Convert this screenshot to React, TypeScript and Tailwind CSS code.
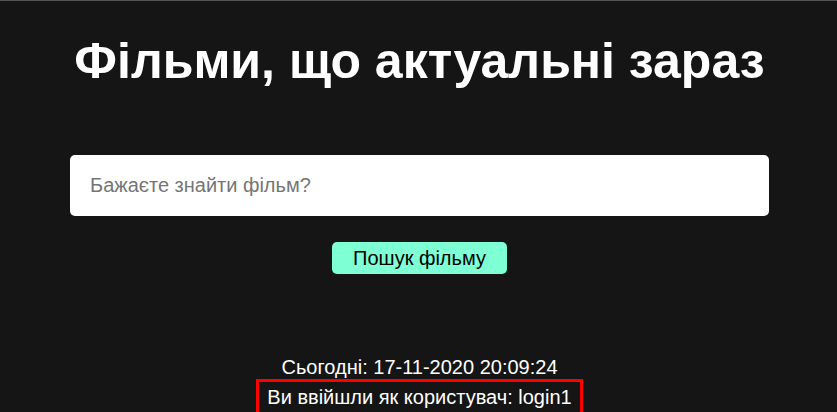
import React from "react";

export default function App() {
  return (
    <div className="min-h-[412px] bg-[#151515] border-t border-[#555555] pl-[2px] flex flex-col items-center font-['Liberation_Sans',Arial,sans-serif]">
      <h1 className="mt-[32px] text-[50px] leading-[57px] font-bold text-white">
        Фільми, що актуальні зараз
      </h1>
      <input
        type="text"
        placeholder="Бажаєте знайти фільм?"
        className="mt-[65px] w-[699px] h-[61px] rounded-[5px] bg-white px-[20px] text-[20px] text-black outline-none placeholder:text-[#757575]"
      />
      <button className="mt-[26px] h-[32px] px-[21px] rounded-[5px] bg-[#7fffd4] text-[20px] leading-[23px] text-black">
        Пошук фільму
      </button>
      <p className="mt-[82px] text-[20px] leading-[23px] text-white">
        Сьогодні: 17-11-2020 20:09:24
      </p>
      <div className="border-[3px] border-[#ff0000] px-[8px] py-[4px] text-[20px] leading-[23px] text-white">
        Ви ввійшли як користувач: login1
      </div>
    </div>
  );
}
